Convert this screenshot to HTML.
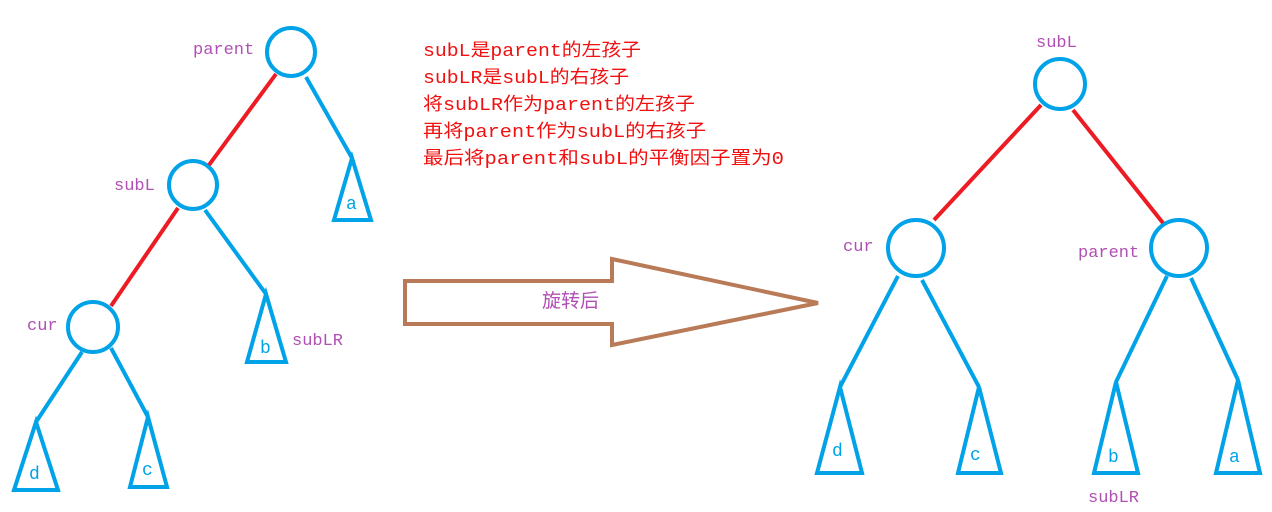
<!DOCTYPE html>
<html><head><meta charset="utf-8"><style>
html,body{margin:0;padding:0;background:#fff;}
svg{display:block;}
.b{fill:none;stroke:#00a2e8;stroke-width:4;stroke-linejoin:miter;}
.r{stroke:#ed1c24;stroke-width:4;}
.lbl{fill:#b04fb4;font-family:"Liberation Mono","Noto Sans CJK SC",monospace;font-size:17px;}
.let{fill:#00a2e8;font-family:"Liberation Mono",monospace;font-size:18px;}
.red{fill:#f01010;font-family:"Liberation Mono","Noto Sans CJK SC",monospace;font-size:18px;}
</style></head><body>
<svg width="1272" height="512" viewBox="0 0 1272 512">
<circle class="b" cx="291" cy="52" r="24"/>
<circle class="b" cx="193" cy="185" r="24"/>
<circle class="b" cx="93" cy="327" r="25"/>
<line class="r" x1="276" y1="74" x2="209" y2="165"/>
<line class="r" x1="178" y1="208" x2="111" y2="306"/>
<polyline class="b" points="306,77 352,158"/>
<polygon class="b" points="352,158 334,220 371,220"/>
<polyline class="b" points="205,210 266,294"/>
<polygon class="b" points="266,294 247,362 286,362"/>
<polyline class="b" points="82,352 36,422"/>
<polygon class="b" points="36,422 14,490 58,490"/>
<polyline class="b" points="111,348 148,417"/>
<polygon class="b" points="148,417 130,487 167,487"/>
<text class="let" x="346" y="209">a</text>
<text class="let" x="260" y="353">b</text>
<text class="let" x="29" y="479">d</text>
<text class="let" x="142" y="475">c</text>
<text class="lbl" x="193" y="54">parent</text>
<text class="lbl" x="114" y="190">subL</text>
<text class="lbl" x="27" y="330">cur</text>
<text class="lbl" x="292" y="345">subLR</text>
<text class="red" x="423" y="56" textLength="218" lengthAdjust="spacingAndGlyphs">subL是parent的左孩子</text>
<text class="red" x="423" y="83" textLength="206" lengthAdjust="spacingAndGlyphs">subLR是subL的右孩子</text>
<text class="red" x="423" y="110" textLength="272" lengthAdjust="spacingAndGlyphs">将subLR作为parent的左孩子</text>
<text class="red" x="423" y="137" textLength="283" lengthAdjust="spacingAndGlyphs">再将parent作为subL的右孩子</text>
<text class="red" x="423" y="164" textLength="361" lengthAdjust="spacingAndGlyphs">最后将parent和subL的平衡因子置为0</text>
<polygon points="405,281 612,281 612,259 818,303 612,345 612,324 405,324" fill="none" stroke="#b97a57" stroke-width="4"/>
<text x="542" y="307" style="fill:#b04fb4;font-family:'Noto Sans CJK SC',sans-serif;font-size:19px;">旋转后</text>
<circle class="b" cx="1060" cy="84" r="25"/>
<circle class="b" cx="916" cy="248" r="28"/>
<circle class="b" cx="1179" cy="248" r="28"/>
<line class="r" x1="1041" y1="105" x2="934" y2="220"/>
<line class="r" x1="1073" y1="110" x2="1163" y2="223"/>
<polyline class="b" points="898,276 840,387"/>
<polygon class="b" points="840,387 817,473 862,473"/>
<polyline class="b" points="922,280 979,387"/>
<polygon class="b" points="979,387 958,473 1001,473"/>
<polyline class="b" points="1167,276 1116,382"/>
<polygon class="b" points="1116,382 1094,473 1138,473"/>
<polyline class="b" points="1191,278 1238,380"/>
<polygon class="b" points="1238,380 1216,473 1260,473"/>
<text class="let" x="832" y="456">d</text>
<text class="let" x="970" y="460">c</text>
<text class="let" x="1108" y="462">b</text>
<text class="let" x="1229" y="462">a</text>
<text class="lbl" x="1036" y="47">subL</text>
<text class="lbl" x="843" y="251">cur</text>
<text class="lbl" x="1078" y="257">parent</text>
<text class="lbl" x="1088" y="502">subLR</text>
</svg>
</body></html>
